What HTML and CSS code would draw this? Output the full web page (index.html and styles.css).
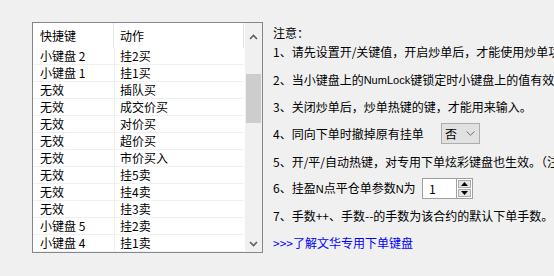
FILE: index.html
```html
<!DOCTYPE html>
<html lang="zh-CN">
<head>
<meta charset="utf-8">
<title>快捷键设置</title>
<link rel="stylesheet" href="styles.css">
</head>
<body>
<div class="page">
  <div class="list">
    <div class="list-main">
      <div class="list-head">
        <div class="hc hc1">快捷键</div>
        <div class="hc hc2">动作</div>
      </div>
      <div class="row"><div class="c1">小键盘 2</div><div class="c2">挂2买</div></div>
      <div class="row"><div class="c1">小键盘 1</div><div class="c2">挂1买</div></div>
      <div class="row"><div class="c1">无效</div><div class="c2">插队买</div></div>
      <div class="row"><div class="c1">无效</div><div class="c2">成交价买</div></div>
      <div class="row"><div class="c1">无效</div><div class="c2">对价买</div></div>
      <div class="row"><div class="c1">无效</div><div class="c2">超价买</div></div>
      <div class="row"><div class="c1">无效</div><div class="c2">市价买入</div></div>
      <div class="row"><div class="c1">无效</div><div class="c2">挂5卖</div></div>
      <div class="row"><div class="c1">无效</div><div class="c2">挂4卖</div></div>
      <div class="row"><div class="c1">无效</div><div class="c2">挂3卖</div></div>
      <div class="row"><div class="c1">小键盘 5</div><div class="c2">挂2卖</div></div>
      <div class="row"><div class="c1">小键盘 4</div><div class="c2">挂1卖</div></div>
    </div>
    <div class="vscroll">
      <div class="sarrow sarrow-up">
        <svg width="9" height="6" viewBox="0 0 9 6"><path d="M1 5 L4.5 1.5 L8 5" fill="none" stroke="#606060" stroke-width="1.6"/></svg>
      </div>
      <div class="track"><div class="thumb"></div></div>
      <div class="sarrow sarrow-down">
        <svg width="9" height="6" viewBox="0 0 9 6"><path d="M1 1 L4.5 4.5 L8 1" fill="none" stroke="#606060" stroke-width="1.6"/></svg>
      </div>
    </div>
  </div>

  <div class="notes">
    <div class="line title">注意：</div>
    <div class="line l1">1、请先设置开/关键值，开启炒单后，才能使用炒单功能。</div>
    <div class="line l2">2、当小键盘上的<span class="latin">NumLock</span>键锁定时小键盘上的值有效。</div>
    <div class="line l3">3、关闭炒单后，炒单热键的键，才能用来输入。</div>
    <div class="line l4">
      <span class="label label4">4、同向下单时撤掉原有挂单</span>
      <div class="select">
        <span class="select-val">否</span>
        <svg class="select-arrow" width="9" height="5" viewBox="0 0 9 5"><path d="M0.5 0.5 L4.5 4.2 L8.5 0.5" fill="none" stroke="#707070" stroke-width="1"/></svg>
      </div>
    </div>
    <div class="line l5">5、开/平/自动热键，对专用下单炫彩键盘也生效。（注：需开启热键）</div>
    <div class="line l6">
      <span class="label label6">6、挂盈<span class="latin">N</span>点平仓单参数<span class="latin">N</span>为</span>
      <div class="spin">
        <div class="spin-input">1</div>
        <div class="spin-btns">
          <div class="spin-btn">
            <svg width="7" height="4" viewBox="0 0 7 4"><path d="M0 4 L3.5 0 L7 4 Z" fill="#000"/></svg>
          </div>
          <div class="spin-btn">
            <svg width="7" height="4" viewBox="0 0 7 4"><path d="M0 0 L3.5 4 L7 0 Z" fill="#000"/></svg>
          </div>
        </div>
      </div>
    </div>
    <div class="line l7">7、手数++、手数--的手数为该合约的默认下单手数。</div>
    <div class="line link">&gt;&gt;&gt;了解文华专用下单键盘</div>
  </div>
</div>
</body>
</html>
```

FILE: styles.css
```css
html, body {
  margin: 0;
  padding: 0;
  background: #f0f0f0;
}

body {
  width: 554px;
  height: 276px;
  overflow: hidden;
  font-family: "Noto Sans CJK SC", "Noto Sans", sans-serif;
  font-size: 12px;
  color: #000;
}

.page {
  display: flex;
  align-items: flex-start;
  padding: 22px 0 0 32px;
}

/* ---------- list view ---------- */
.list {
  flex: none;
  display: flex;
  width: 229px;
  height: 229px;
  border: 1px solid #828790;
  background: #fff;
}

.list-main {
  width: 212px;
  overflow: hidden;
}

.list-head {
  display: flex;
  height: 25px;
  line-height: 25px;
}

.hc {
  box-sizing: border-box;
  height: 25px;
  border-right: 1px solid #e5e5e5;
}

.hc1 {
  width: 81px;
  padding-left: 7px;
}

.hc2 {
  width: 130px;
  padding-left: 6px;
}

.row {
  display: flex;
  width: 211px;
  height: 16px;
  line-height: 16px;
  border-bottom: 1px solid #f0f0f0;
}

.c1 {
  box-sizing: border-box;
  width: 82px;
  padding-left: 7px;
  border-right: 1px solid #f0f0f0;
}

.c2 {
  padding-left: 5px;
}

/* ---------- scrollbar ---------- */
.vscroll {
  width: 17px;
  display: flex;
  flex-direction: column;
  background: #f0f0f0;
}

.sarrow {
  height: 17px;
  display: flex;
  justify-content: center;
}

.sarrow-up {
  align-items: flex-end;
}

.sarrow-down {
  align-items: center;
}

.track {
  flex: 1;
}

.thumb {
  margin: 34px 1px 0 1px;
  height: 49px;
  background: #cdcdcd;
}

/* ---------- notes ---------- */
.notes {
  flex: none;
  width: 281px;
  margin-left: 10px;
  padding-top: 2px;
  display: flex;
  flex-direction: column;
  white-space: nowrap;
  overflow: hidden;
}

.line {
  display: flex;
  align-items: center;
  height: 20px;
  line-height: 20px;
}

.title { height: 18px; line-height: 18px; }
.l1 { margin-top: 0; }
.l2 { margin-top: 8px; }
.l3 { margin-top: 7px; }
.l4 { margin-top: 6px; height: 21px; }
.l5 { margin-top: 8px; }
.l6 { margin-top: 6px; height: 21px; }
.l7 { margin-top: 7px; }
.link { margin-top: 7px; color: #0000ff; }

.latin {
  font-family: "Liberation Sans", sans-serif;
  font-size: 11px;
}

.label {
  flex: none;
}

.label4 { width: 168px; }
.label6 { width: 149px; }

/* combo box */
.select {
  box-sizing: border-box;
  width: 39px;
  height: 21px;
  border: 1px solid #adadad;
  background: #e1e1e1;
  display: flex;
  align-items: center;
  padding-left: 3px;
}

.select-val {
  line-height: 19px;
}

.select-arrow {
  margin-left: 9px;
}

/* spin box */
.spin {
  display: flex;
  height: 21px;
}

.spin-input {
  box-sizing: border-box;
  width: 34px;
  height: 21px;
  border: 1px solid #a0a0a0;
  border-right: none;
  background: #fff;
  padding-left: 6px;
  line-height: 19px;
}

.spin-btns {
  box-sizing: border-box;
  width: 17px;
  height: 21px;
  border: 1px solid #a0a0a0;
  background: #fff;
  display: flex;
  flex-direction: column;
  padding: 1px;
  gap: 1px;
}

.spin-btn {
  flex: 1;
  border: 1px solid #adadad;
  background: #e5e5e5;
  display: flex;
  align-items: center;
  justify-content: center;
}
```
